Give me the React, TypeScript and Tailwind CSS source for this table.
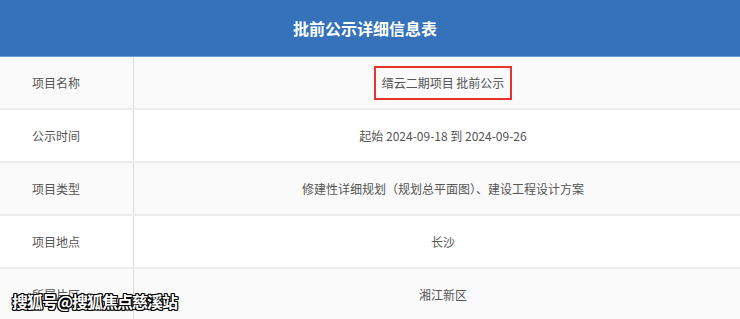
const rows: { label: string; value: string; boxed?: boolean }[] = [
  { label: "项目名称", value: "缙云二期项目 批前公示", boxed: true },
  { label: "公示时间", value: "起始 2024-09-18 到 2024-09-26" },
  { label: "项目类型", value: "修建性详细规划（规划总平面图）、建设工程设计方案" },
  { label: "项目地点", value: "长沙" },
  { label: "所属片区", value: "湘江新区" },
];

export default function App() {
  return (
    <div
      className="relative h-[319px] w-[740px] overflow-hidden bg-white text-[12px] text-[#555]"
      style={{ fontFamily: '"Microsoft YaHei", "Noto Sans CJK SC", sans-serif' }}
    >
      <div className="flex h-[57px] items-center justify-center border-b border-[#6b9bd6] bg-[#3572ba] pr-[10px] text-[16px] font-bold text-white">
        批前公示详细信息表
      </div>

      <div className="flex flex-col">
        {rows.map((row, i) => (
          <div
            key={row.label}
            className={`flex h-[53px] shrink-0 border-b-2 border-[#ececec] ${i % 2 === 0 ? "bg-[#fafafa]" : "bg-white"}`}
          >
            <div className="flex w-[134px] shrink-0 items-center border-r border-[#dcdcdc] pl-8">{row.label}</div>
            <div className="flex flex-1 items-center justify-center pl-3">
              {row.boxed ? (
                <span className="border-2 border-[#e8332f] px-[6px] py-[6px]">{row.value}</span>
              ) : (
                row.value
              )}
            </div>
          </div>
        ))}
      </div>

      {/* site watermark */}
      <div
        className="absolute left-[12px] top-[289px] text-[16px] font-bold tracking-[-1px] text-white"
        style={{ textShadow: "1px 0 #000, -1px 0 #000, 0 1px #000, 0 -1px #000, 1px 1px #000, -1px -1px #000, 1px -1px #000, -1px 1px #000" }}
      >
        搜狐号@搜狐焦点慈溪站
      </div>
    </div>
  );
}
